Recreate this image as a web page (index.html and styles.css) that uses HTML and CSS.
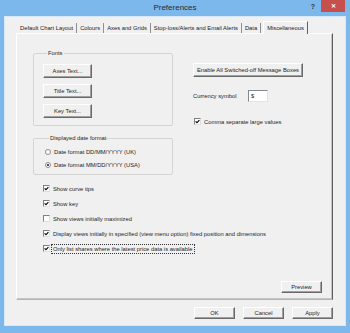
FILE: index.html
```html
<!DOCTYPE html>
<html>
<head>
	<title>Preferences</title>
	<link rel="stylesheet" href="styles.css">
</head>
<body>
	<div class="window">
		<div class="titlebar">
			<span></span>
			<span class="title">Preferences</span>
			<div class="controls">
				<span class="help">?</span>
				<span class="close">&#x2715;</span>
			</div>
		</div>
		<div class="client">
			<div class="tabs">
				<span class="tab">Default Chart Layout</span>
				<span class="tab">Colours</span>
				<span class="tab">Axes and Grids</span>
				<span class="tab">Stop-loss/Alerts and Email Alerts</span>
				<span class="tab">Data</span>
				<span class="tab active">Miscellaneous</span>
			</div>
			<div class="panel">
				<div class="columns">
					<div class="col-left">
						<fieldset class="group fonts">
							<legend>Fonts</legend>
							<button class="btn small">Axes Text...</button>
							<button class="btn small">Title Text...</button>
							<button class="btn small">Key Text...</button>
						</fieldset>
						<fieldset class="group dates">
							<legend>Displayed date format</legend>
							<label class="opt"><span class="radio"></span>Date format DD/MM/YYYY (UK)</label>
							<label class="opt"><span class="radio on"></span>Date format MM/DD/YYYY (USA)</label>
						</fieldset>
					</div>
					<div class="col-right">
						<button class="btn wide">Enable All Switched-off Message Boxes</button>
						<div class="currency">
							<span class="currency-label">Currency symbol</span>
							<span class="textbox">$</span>
						</div>
						<label class="opt"><span class="box on"></span>Comma separate large values</label>
					</div>
				</div>
				<div class="checklist">
					<label class="opt"><span class="box on"></span>Show curve tips</label>
					<label class="opt"><span class="box on"></span>Show key</label>
					<label class="opt"><span class="box"></span>Show views initially maximized</label>
					<label class="opt"><span class="box on"></span>Display views initially in specified (view menu option) fixed position and dimensions</label>
					<label class="opt"><span class="box on"></span><span class="focus">Only list shares where the latest price data is available</span></label>
				</div>
				<div class="panel-foot">
					<button class="btn">Preview</button>
				</div>
			</div>
			<div class="dialog-buttons">
				<button class="btn">OK</button>
				<button class="btn">Cancel</button>
				<button class="btn">Apply</button>
			</div>
		</div>
	</div>
</body>
</html>
```

FILE: styles.css
```css
body {
	margin: 0;
	font-family: "Liberation Sans", Arial, sans-serif;
	font-size: 5.8px;
	color: #1e1e1e;
}
.window {
	width: 350px;
	height: 333px;
	box-sizing: border-box;
	background: #7db8ec;
	padding: 0 5px 8px 5px;
	display: flex;
	flex-direction: column;
}
.titlebar {
	height: 17px;
	display: grid;
	grid-template-columns: 1fr auto 1fr;
}
.title {
	font-size: 8px;
	line-height: 16px;
	color: #2a2a2a;
}
.controls {
	display: flex;
	justify-content: flex-end;
	align-items: flex-start;
}
.help {
	font-size: 7px;
	font-weight: bold;
	color: #333;
	margin-right: 6px;
	line-height: 13px;
}
.close {
	width: 24px;
	height: 12px;
	background: #c7504e;
	color: #fff;
	font-size: 6px;
	font-weight: bold;
	text-align: center;
	line-height: 12px;
}
.client {
	flex: 1;
	background: #f0f0f0;
	padding: 4px 12px 0 11px;
	display: flex;
	flex-direction: column;
	box-shadow: 0 0 0 1px #d9e8f6;
}
.tabs {
	display: flex;
	align-items: flex-end;
	height: 12px;
	padding-left: 1px;
}
.tab {
	height: 10px;
	line-height: 10px;
	padding: 0 3px;
	border-right: 1px solid #8f8f8f;
	color: #222;
}
.tab.active {
	box-sizing: border-box;
	height: 13px;
	line-height: 11px;
	padding: 1px 3px 0 3px;
	margin-left: 2px;
	margin-bottom: -1px;
	border-left: 1px solid #fff;
	border-top: 1px solid #fff;
	border-right: 1px solid #5e5e5e;
	position: relative;
	background: #f0f0f0;
	z-index: 1;
}
.panel {
	height: 267px;
	box-sizing: border-box;
	border-left: 1px solid #fff;
	border-top: 1px solid #fff;
	border-right: 1px solid #5e5e5e;
	border-bottom: 1px solid #b5b5b5;
	box-shadow: inset -1px -1px 0 #c4c4c4;
	padding: 16px 10px 6px 16px;
	display: flex;
	flex-direction: column;
}
.columns {
	display: flex;
	gap: 20px;
}
.col-left {
	width: 140px;
	display: flex;
	flex-direction: column;
	gap: 9px;
}
.group {
	margin: 0;
	border: 1px solid #d4d4d4;
	border-radius: 2px;
	display: flex;
	flex-direction: column;
	align-items: flex-start;
}
.group legend {
	line-height: 7px;
	padding: 0 1px;
	margin-left: 4px;
}
.fonts {
	padding: 7px 0 7px 9px;
	gap: 6px;
}
.dates {
	padding: 3px 0 3px 11px;
}
.dates .opt {
	height: 13px;
}
.btn {
	font-family: inherit;
	font-size: 5.8px;
	color: #1e1e1e;
	background: #f0f0f0;
	border-top: 1px solid #fff;
	border-left: 1px solid #fff;
	border-right: 1px solid #696969;
	border-bottom: 1px solid #696969;
	box-shadow: inset -1px -1px 0 #a0a0a0;
	width: 41px;
	height: 12px;
	padding: 0;
	line-height: 10px;
}
.btn.small {
	width: 49px;
	height: 14px;
}
.btn.wide {
	width: 110px;
	height: 14px;
}
.col-right {
	padding-top: 13px;
	display: flex;
	flex-direction: column;
	align-items: flex-start;
}
.currency {
	display: flex;
	align-items: center;
	margin-top: 13px;
}
.currency-label {
	width: 55px;
}
.textbox {
	width: 20px;
	height: 12px;
	box-sizing: border-box;
	background: #fff;
	border-top: 1px solid #828790;
	border-left: 1px solid #828790;
	border-right: 1px solid #e3e3e3;
	border-bottom: 1px solid #e3e3e3;
	line-height: 10px;
	padding-left: 2px;
}
.col-right .opt {
	margin-top: 12px;
	margin-left: 1px;
	height: 15px;
}
.opt {
	display: flex;
	align-items: center;
	white-space: nowrap;
	height: 15px;
}
.box {
	width: 7px;
	height: 7px;
	box-sizing: border-box;
	background: #fff;
	border-top: 1px solid #808080;
	border-left: 1px solid #808080;
	border-right: 1px solid #e0e0e0;
	border-bottom: 1px solid #e0e0e0;
	margin-right: 3px;
	flex: none;
}
.box.on {
	background: #fff url("data:image/svg+xml,%3Csvg xmlns='http://www.w3.org/2000/svg' viewBox='0 0 5 5'%3E%3Cpath d='M0.6 2.3 L2 3.7 L4.4 1.2' fill='none' stroke='%23000' stroke-width='1.1'/%3E%3C/svg%3E") no-repeat center / 5px 5px;
}
.radio {
	width: 6px;
	height: 6px;
	box-sizing: border-box;
	border-radius: 50%;
	background: #fff;
	border: 1px solid #8a8a8a;
	margin-right: 3px;
	flex: none;
	display: flex;
	align-items: center;
	justify-content: center;
}
.radio.on::after {
	content: "";
	width: 2px;
	height: 2px;
	border-radius: 50%;
	background: #111;
}
.checklist {
	margin-top: 6px;
	padding-left: 10px;
	display: flex;
	flex-direction: column;
}
.focus {
	outline: 1px dotted #333;
	outline-offset: 1px;
}
.panel-foot {
	margin-top: auto;
	display: flex;
	justify-content: flex-end;
}
.dialog-buttons {
	margin-top: 7px;
	display: flex;
	justify-content: flex-end;
	gap: 8px;
}
```
